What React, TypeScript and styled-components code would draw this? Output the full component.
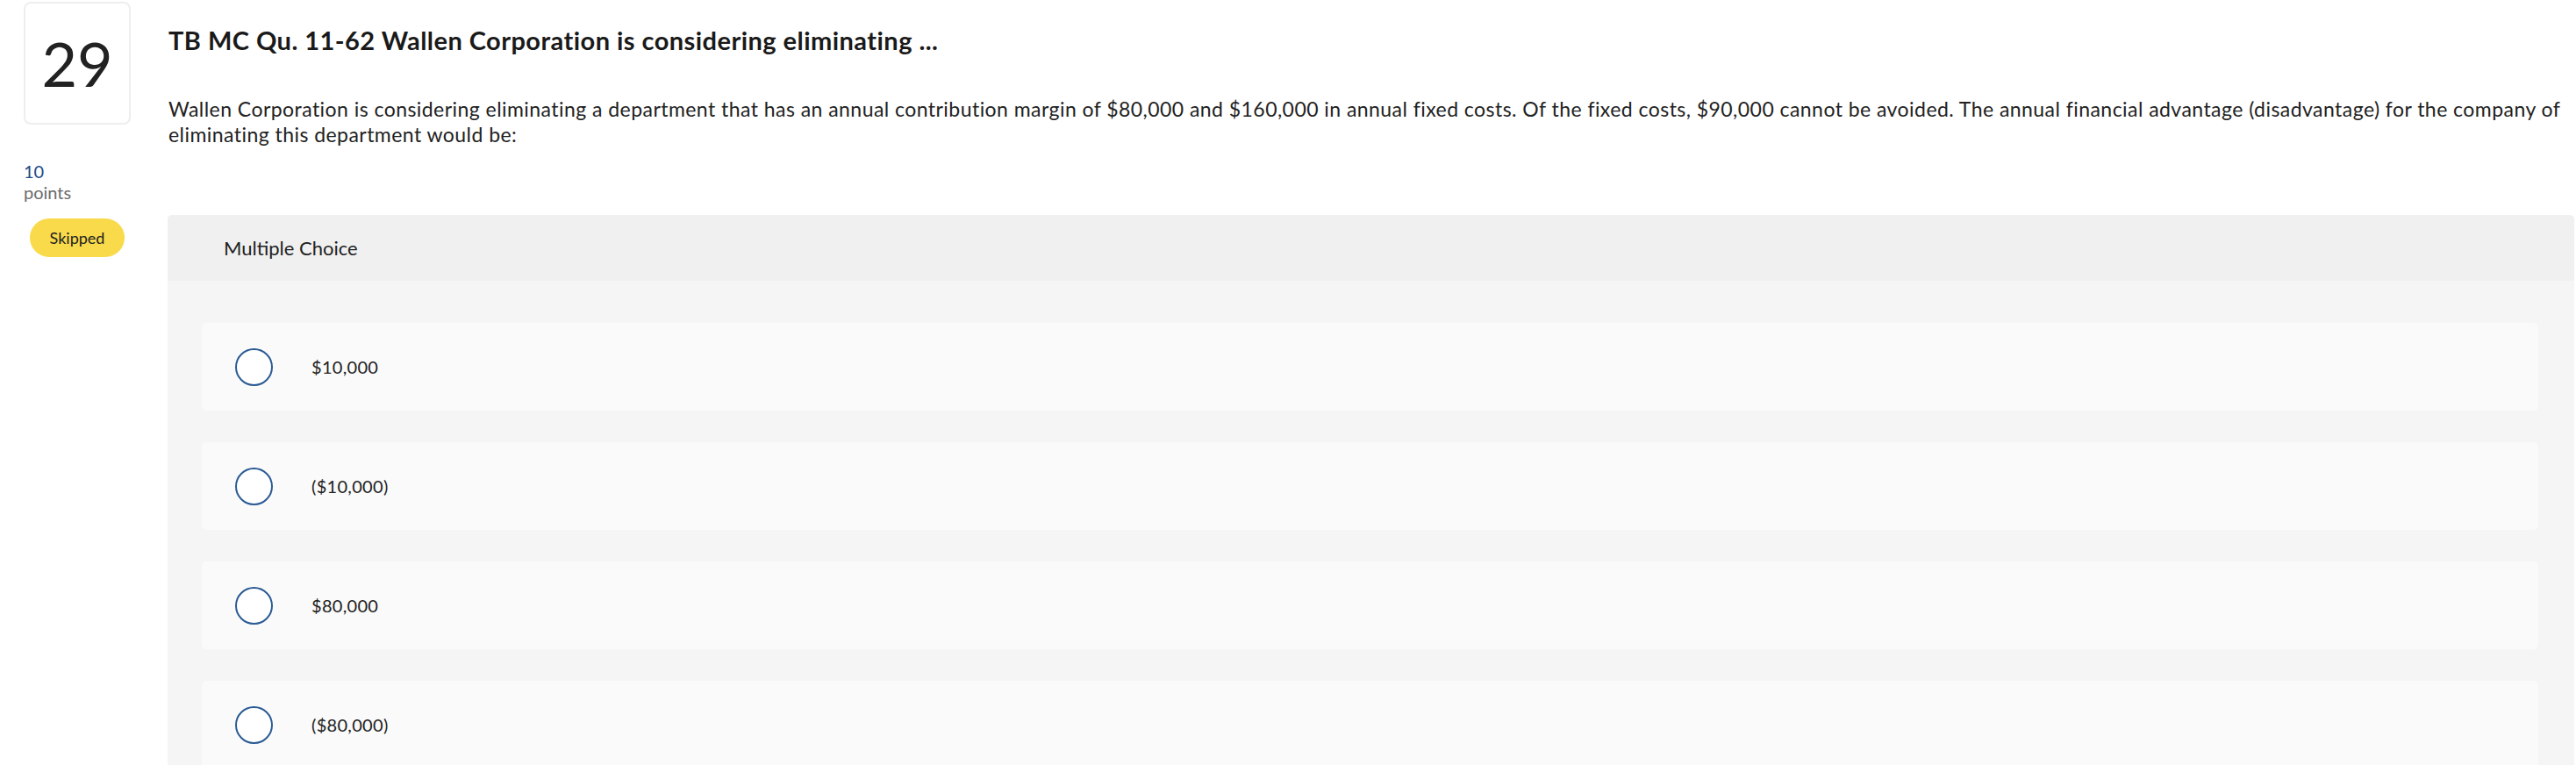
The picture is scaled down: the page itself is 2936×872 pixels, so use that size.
import styled, { createGlobalStyle } from "styled-components";

const GlobalStyle = createGlobalStyle`
  html, body {
    margin: 0;
    padding: 0;
    background: #fff;
    height: 872px;
    overflow: hidden;
  }
  body {
    font-family: Lato, "Liberation Sans", sans-serif;
    color: #222;
  }
`;

const Page = styled.div`
  display: flex;
  flex-direction: row;
  align-items: flex-start;
  padding: 2px 2px 0 27px;
  gap: 42px;
  width: 2936px;
  box-sizing: border-box;
`;

const Side = styled.div`
  width: 122px;
  flex-shrink: 0;
  display: flex;
  flex-direction: column;
`;

const NumberBox = styled.div`
  width: 122px;
  height: 140px;
  box-sizing: border-box;
  border: 2px solid #eeeeee;
  border-radius: 8px;
  display: flex;
  align-items: center;
  justify-content: center;
  font-size: 70px;
  color: #222;
`;

const Points = styled.div`
  margin-top: 41px;
  font-size: 20px;
  line-height: 24px;
  color: #1d4a8b;

  span {
    display: block;
    color: #6b6b6b;
  }
`;

const Badge = styled.div`
  margin: 18px 0 0 7px;
  width: 108px;
  height: 44px;
  border-radius: 22px;
  background: #f9da4a;
  display: flex;
  align-items: center;
  justify-content: center;
  font-size: 18px;
  color: #222;
`;

const Main = styled.div`
  flex: 1;
  display: flex;
  flex-direction: column;
`;

const Title = styled.h1`
  margin: 26px 0 0 1px;
  font-size: 29px;
  line-height: 36px;
  font-weight: 700;
  letter-spacing: 0.45px;
  color: #1a1a1a;
`;

const Prompt = styled.p`
  margin: 46px 0 0 1px;
  font-size: 23px;
  line-height: 29px;
  letter-spacing: 0.45px;
  color: #222;
`;

const Panel = styled.div`
  margin-top: 77px;
  background: #f5f5f5;
  border-radius: 5px 5px 0 0;
  overflow: hidden;
`;

const PanelHead = styled.div`
  height: 75px;
  background: #f0f0f0;
  display: flex;
  align-items: center;
  padding-left: 64px;
  font-size: 22px;
  color: #222;
`;

const Choices = styled.div`
  display: flex;
  flex-direction: column;
  gap: 36px;
  padding: 48px 41px 40px 39px;
`;

const Choice = styled.label`
  height: 100px;
  background: #fafafa;
  border-radius: 5px;
  display: flex;
  align-items: center;
  padding-left: 38px;
  gap: 44px;
  font-size: 20px;
  letter-spacing: 0.3px;
  color: #222;
`;

const Radio = styled.span`
  width: 43px;
  height: 43px;
  box-sizing: border-box;
  border: 2px solid #2b5b94;
  border-radius: 50%;
  background: #fff;
  flex-shrink: 0;
`;

const options = ["$10,000", "($10,000)", "$80,000", "($80,000)"];

const App = () => {
  return (
    <>
      <GlobalStyle />
      <Page>
        <Side>
          <NumberBox>29</NumberBox>
          <Points>
            10
            <span>points</span>
          </Points>
          <Badge>Skipped</Badge>
        </Side>
        <Main>
          <Title>TB MC Qu. 11-62 Wallen Corporation is considering eliminating ...</Title>
          <Prompt>
            Wallen Corporation is considering eliminating a department that has an annual contribution margin of
            $80,000 and $160,000 in annual fixed costs. Of the fixed costs, $90,000 cannot be avoided. The annual
            financial advantage (disadvantage) for the company of eliminating this department would be:
          </Prompt>
          <Panel>
            <PanelHead>Multiple Choice</PanelHead>
            <Choices>
              {options.map((o) => (
                <Choice key={o}>
                  <Radio />
                  {o}
                </Choice>
              ))}
            </Choices>
          </Panel>
        </Main>
      </Page>
    </>
  );
};

export default App;
